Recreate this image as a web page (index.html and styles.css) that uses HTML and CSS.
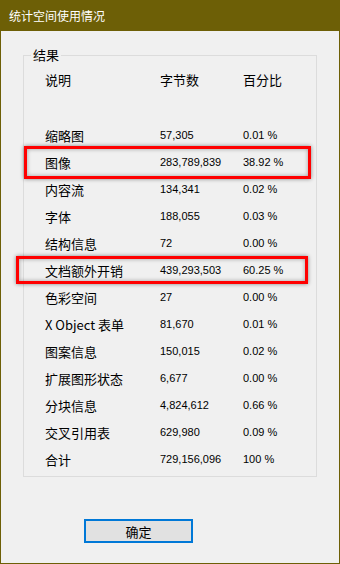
FILE: index.html
```html
<!DOCTYPE html>
<html lang="zh-CN">
<head>
    <meta charset="UTF-8">
    <title>统计空间使用情况</title>
    <link rel="stylesheet" href="styles.css">
</head>
<body>
    <div class="window">
        <div class="titlebar">统计空间使用情况</div>
        <div class="content">
            <fieldset class="result">
                <legend>结果</legend>
                <div class="row head">
                    <span>说明</span>
                    <span>字节数</span>
                    <span>百分比</span>
                </div>
                <div class="spacer"></div>
                <div class="row"><span>缩略图</span><span class="num">57,305</span><span class="num">0.01 %</span></div>
                <div class="row mark-a"><span>图像</span><span class="num">283,789,839</span><span class="num">38.92 %</span></div>
                <div class="row"><span>内容流</span><span class="num">134,341</span><span class="num">0.02 %</span></div>
                <div class="row"><span>字体</span><span class="num">188,055</span><span class="num">0.03 %</span></div>
                <div class="row"><span>结构信息</span><span class="num">72</span><span class="num">0.00 %</span></div>
                <div class="row mark-b"><span>文档额外开销</span><span class="num">439,293,503</span><span class="num">60.25 %</span></div>
                <div class="row"><span>色彩空间</span><span class="num">27</span><span class="num">0.00 %</span></div>
                <div class="row"><span>X Object 表单</span><span class="num">81,670</span><span class="num">0.01 %</span></div>
                <div class="row"><span>图案信息</span><span class="num">150,015</span><span class="num">0.02 %</span></div>
                <div class="row"><span>扩展图形状态</span><span class="num">6,677</span><span class="num">0.00 %</span></div>
                <div class="row"><span>分块信息</span><span class="num">4,824,612</span><span class="num">0.66 %</span></div>
                <div class="row"><span>交叉引用表</span><span class="num">629,980</span><span class="num">0.09 %</span></div>
                <div class="row"><span>合计</span><span class="num">729,156,096</span><span class="num">100 %</span></div>
            </fieldset>
            <button class="ok">确定</button>
        </div>
    </div>
</body>
</html>
```

FILE: styles.css
```css
body {
    margin: 0;
    font-family: "Noto Sans CJK SC", "Liberation Sans", sans-serif;
    font-size: 13px;
    color: #000;
}
.window {
    width: 340px;
    height: 564px;
    box-sizing: border-box;
    border: 1px solid #6d5f06;
    background-color: #f0f0f0;
    display: flex;
    flex-direction: column;
}
.titlebar {
    height: 30px;
    line-height: 30px;
    background-color: #6d5f06;
    color: #fff;
    font-size: 12px;
    padding-left: 8px;
}
.content {
    flex: 1;
}
.result {
    margin: 16px 0 0 22px;
    width: 294px;
    box-sizing: border-box;
    padding: 3px 0 3px 0;
    border: 1px solid #dcdcdc;
    min-width: 0;
}
.result legend {
    margin-left: 7px;
    padding: 0 2px;
    line-height: 16px;
}
.row {
    display: grid;
    grid-template-columns: 115px 83px 1fr;
    height: 27px;
    line-height: 27px;
    padding-left: 21px;
    position: relative;
    white-space: nowrap;
}
.spacer {
    height: 29px;
}
.num {
    font-family: "Liberation Sans", sans-serif;
    font-size: 11px;
}
.mark-a::after,
.mark-b::after {
    content: "";
    position: absolute;
    border: 3px solid #f00;
    box-shadow: 0 0 4px rgba(0, 0, 0, 0.45), inset 0 0 4px rgba(0, 0, 0, 0.35);
}
.mark-a::after {
    left: 0;
    right: 5px;
    top: -3px;
    bottom: -3px;
}
.mark-b::after {
    left: -8px;
    right: 8px;
    top: -1px;
    bottom: 0;
}
.ok {
    display: block;
    margin: 42px 0 0 83px;
    width: 109px;
    height: 24px;
    box-sizing: border-box;
    border: 2px solid #0078d7;
    background-color: #e1e1e1;
    font-family: "Noto Sans CJK SC", sans-serif;
    font-size: 13px;
    color: #000;
    padding: 0;
}
```
